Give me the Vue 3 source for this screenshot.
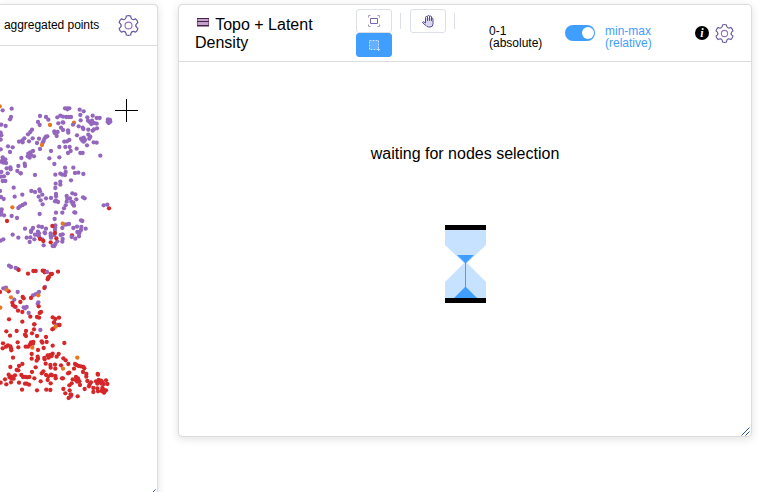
<script setup>
const colors = { purple: '#9467bd', red: '#d62728', orange: '#e6761f' }

// Each group lists "x,y" pairs in thirds of a pixel, offset by its top row.
const groups = [
  { color: 'orange', top: 95, pts: '222,83' },
  { color: 'red', top: 170, pts: '216,196' },
  { color: 'purple', top: 95, pts: '8,46 35,41 33,66 30,73 4,89 17,93 120,63 138,66 145,74 114,81 119,90 96,104 91,111 84,118 73,130 67,136 57,140 68,142 87,139 98,130 117,131 111,144 134,130 142,124 138,125 131,138 128,143 120,162 195,40 202,40 208,40 202,43 172,67 181,62 189,65 199,66 207,66 213,66 175,85 188,82 190,83 183,98 189,105 163,109 173,111 164,114 170,123 204,106 205,113 219,89 239,44 251,49 241,60 278,62 262,67 290,69 299,69 242,76 264,77 270,82 276,77 274,87 282,84 290,86 236,94 248,98 250,102 265,104 278,107 282,103 291,100 231,121 265,119 271,125 243,131 251,128 247,137 255,135 251,140 268,131 261,151 281,142 290,143 193,140 201,139 208,135 178,156 196,156 209,156 230,161 212,168 204,174 241,174 248,174 301,182 324,73 330,75 323,80 331,80 326,84 153,168 148,190 178,187 163,207 24,154 38,157 30,171 2,113 4,121 2,134 2,163 8,187 16,193 4,200 10,203 18,204 8,195 20,220 31,217 32,223 64,189 85,176 91,172 99,168 83,184 89,188 93,180 102,184 74,206 75,213 55,213 52,228 62,235 195,218 220,218' },
  { color: 'purple', top: 170, pts: '4,6 23,10 12,19 3,20 8,33 16,33 105,15 62,10 166,14 181,11 187,14 195,15 197,6 225,9 235,8 250,12 213,31 181,35 181,44 167,41 166,54 41,53 0,63 3,81 11,87 44,80 67,74 94,63 105,66 118,58 120,64 127,74 116,80 122,91 128,103 138,85 153,84 168,72 168,79 165,94 174,96 168,91 200,78 202,86 217,70 226,73 210,85 229,88 249,82 254,85 200,95 197,106 192,115 214,95 220,98 218,102 222,107 55,114 60,109 68,105 75,101 5,118 4,126 2,134 12,136 35,138 51,144 119,132 168,128 187,128 223,127 226,128 164,147 243,151 247,153 195,164 201,163 207,162 166,166 165,172 187,174 116,169 126,171 75,176 99,174 94,181 93,186 138,176 114,185 117,190 105,194 112,194 134,187 135,190 117,199 103,208 89,216 80,203 91,202 127,208 131,226 38,194 55,203 2,212 10,208 220,174 231,170 244,171 257,176 243,180 232,186 239,186 237,191 237,199 226,206 215,201 165,180 152,190 152,197 153,203 163,195 182,195 188,193 188,207 187,215 172,214 166,222 163,228 158,228 311,106 322,104' },
  { color: 'purple', top: 245, pts: '27,62 33,66 47,69 53,72 10,130 18,128 53,141 43,164 47,186 71,187 80,186 75,190 99,151 106,148 112,146 117,141 115,172 113,176 86,204 135,126 18,132 171,240' },
  { color: 'purple', top: 320, pts: '121,30 212,230' },
  { color: 'red', top: 170, pts: '21,153 157,168 165,189 169,205 152,217 120,207 130,213 327,115' },
  { color: 'red', top: 245, pts: '56,75 84,86 100,78 107,78 128,77 133,78 134,82 152,87 156,87 147,96 144,99 143,103 174,80 133,129 26,139 0,141 68,156 71,160 93,159 37,173 39,181 61,171 45,185 54,197 67,201 116,184 119,204 123,201 111,216 117,218 91,215 27,223 67,230 158,217 166,222 177,218 162,232 178,240 103,238' },
  { color: 'purple', top: 245, pts: '141,81' },
  { color: 'red', top: 320, pts: '19,34 50,33 78,33 103,13 102,28 96,40 30,47 75,44 78,48 111,48 138,51 157,28 160,26 178,15 162,8 9,70 8,85 24,76 18,80 31,79 33,85 34,91 53,67 55,82 77,80 84,80 93,67 100,66 99,71 90,74 125,64 127,68 140,66 131,84 114,90 158,77 193,69 95,102 95,116 39,113 113,110 114,116 110,122 133,114 134,118 143,106 146,113 151,105 155,108 158,101 170,110 176,102 190,115 197,121 205,132 31,141 57,138 67,132 50,150 55,151 107,142 137,131 151,135 152,143 165,134 166,146 183,136 222,146 225,132 229,135 236,138 243,139 250,141 253,145 249,156 259,162 259,170 204,160 208,158 96,156 130,154 125,160 26,164 29,172 35,170 45,166 35,176 41,176 15,178 2,188 19,193 33,187 57,188 64,165 69,171 76,171 88,171 82,172 103,175 122,184 138,165 145,169 153,164 156,166 166,168 143,180 167,175 186,175 189,175 152,190 75,191 80,191 87,194 66,209 111,211 139,209 151,210 218,178 228,171 234,175 235,181 228,181 232,185 238,184 215,190 208,196 209,211 240,195 190,207 196,220 212,223 214,225 206,234 233,229 262,183 273,187 269,193 267,199 254,207 293,162 294,164 288,184 296,180 303,182 300,186 306,186 305,191 318,181 322,192 311,192 292,191 280,204 280,216 292,205 294,214 307,204 310,208 318,211 313,216 305,213 312,218' },
  { color: 'orange', top: 95, pts: '-1,34 150,90 126,150' },
  { color: 'orange', top: 170, pts: '37,112 188,161' },
  { color: 'orange', top: 245, pts: '33,157 20,134 1,188 115,151' },
  { color: 'orange', top: 320, pts: '167,20 97,83 232,113 189,146' },
]

const dots = groups.flatMap(g => g.pts.split(' ').map(p => {
  const [x, y] = p.split(',').map(Number)
  return { x: x / 3, y: g.top - 46 + y / 3, fill: colors[g.color] }
}))

const gear = (() => {
  // six rounded teeth around the centre
  const out = []
  for (let i = 0; i < 6; i++) {
    const a = (i * 60 - 90) * Math.PI / 180
    const pt = (r, d) => {
      const t = a + d * Math.PI / 180
      return `${(10 + r * Math.cos(t)).toFixed(2)} ${(10 + r * Math.sin(t)).toFixed(2)}`
    }
    out.push(`${i ? 'L' : 'M'}${pt(7.9, -17)} L${pt(9.3, -13)} Q${pt(9.8, 0)} ${pt(9.3, 13)} L${pt(7.9, 17)} Q${pt(6.1, 30)} ${pt(7.9, 43)}`)
  }
  return out.join(' ') + 'Z'
})()
</script>

<template>
  <main class="board">
    <section class="card left">
      <header class="head">
        <span class="label">aggregated points</span>
        <svg class="gear" viewBox="0 0 20 20"><path :d="gear" /><circle cx="10" cy="10" r="3.3" /></svg>
      </header>
      <svg class="plot" viewBox="0 0 157 446">
        <circle v-for="(d, i) in dots" :key="i" :cx="d.x" :cy="d.y" r="2.15" :fill="d.fill" />
        <path class="cross" d="M115 64.500h23M126.500 53v23" />
      </svg>
      <svg class="grip" viewBox="0 0 9 9"><path d="M.5 8.500l8-8M4.500 8.500l4-4" /></svg>
    </section>

    <section class="card right">
      <header class="head">
        <h1 class="title">
          <svg class="bars" viewBox="0 0 12 9"><path fill="#c3a2d0" d="M0 0h12v8H0z" /><path d="M0 .5h12M0 3.500h12M0 7.500h12" /></svg>
          Topo + Latent Density
        </h1>
        <div class="tools">
          <div class="stack">
            <button class="btn">
              <svg viewBox="0 0 12 12"><path d="M2.500 3.500h7v5h-7z" /><path class="corner" d="M.5 2.500v-2h2M9.500.5h2v2M.5 9.500v2h2M9.500 11.500h2v-2" /></svg>
            </button>
            <button class="btn active">
              <svg viewBox="0 0 12 12"><rect x="2" y="2" width="8" height="8" fill="#fff" fill-opacity=".2" stroke="none" /><path stroke-dasharray="2 1" d="M1.500 1.500h9v9h-9z" /><path d="M9.500 10.500h2.500M10.500 9.500v2.500" /></svg>
            </button>
          </div>
          <i class="rule"></i>
          <button class="btn hand">
            <svg viewBox="0 0 12 13"><path fill="#dcd5f0" stroke="none" d="M3.500 3h7v6L9 12H5L3 9z" /><path d="M3.500 8V2.500q0-1 1-1t1 1V6M5.500 5.500V1.500q0-1 1-1t1 1v4M7.500 5.500V2q0-1 1-1t1 1v4M9.500 6V4q0-.8.700-.8t.800.800V9q0 3-3 3H6.500Q5 12 4 10.500L.8 8q-.6-1.200.6-1.300L3.500 8" /></svg>
          </button>
          <i class="rule"></i>
        </div>
        <div class="scale">
          <span class="off">0-1<br>(absolute)</span>
          <span class="switch"></span>
          <span class="on">min-max<br>(relative)</span>
        </div>
        <div class="actions">
          <span class="info">i</span>
          <svg class="gear small" viewBox="0 0 20 20"><path :d="gear" /><circle cx="10" cy="10" r="3.3" /></svg>
        </div>
      </header>
      <div class="body">
        <p>waiting for nodes selection</p>
        <svg class="glass" viewBox="0 0 41 78">
          <path fill="#c6e2ff" d="M0 5h41v15L22 38 41 57v16H0V57L19 38 0 20z" />
          <path fill="#409eff" d="M12 30h17l-8 8h-1zM20 38h1v24l11 11H9l11-11z" />
          <path d="M0 0h41v5H0zM0 73h41v5H0z" />
        </svg>
      </div>
      <svg class="grip" viewBox="0 0 9 9"><path d="M.5 8.500l8-8M4.500 8.500l4-4" /></svg>
    </section>
  </main>
</template>

<style>
body { background: #fff; overflow: hidden; }
</style>

<style scoped>
.board { display: flex; align-items: flex-start; gap: 20px; height: 492px; padding-top: 4px; box-sizing: border-box; font-family: "Liberation Sans", Arial, sans-serif; font-size: 12px; color: #000; overflow: hidden; }
.card { position: relative; box-sizing: border-box; border: 1px solid #dcdcdc; border-radius: 4px; background: #fff; box-shadow: 0 2px 8px rgba(0, 0, 0, .12); }
.head { display: flex; box-sizing: border-box; border-bottom: 1px solid #dcdcdc; }
.left { width: 158px; height: 495px; border-left: 0; border-top-left-radius: 0; flex: none; }
.left .head { height: 41px; align-items: center; justify-content: space-between; padding: 0 18px 0 4px; }
.label { letter-spacing: -.05px; }
.gear { width: 21px; height: 21px; fill: none; stroke: #6657a0; stroke-width: 1.15; overflow: visible; }
.gear circle { stroke: #9a72b8; }
.gear.small { width: 19px; height: 19px; }
.plot { display: block; width: 157px; height: 446px; }
.cross { stroke: #000; fill: none; }
.grip { position: absolute; right: 1px; bottom: 0; width: 9px; height: 9px; fill: none; stroke: #24589a; }
.right { width: 574px; height: 433px; flex: none; }
.right .head { height: 57px; }
.title { width: 161px; box-sizing: border-box; margin: 0; padding: 11px 0 0; margin-left: 16px; font-size: 16px; line-height: 18px; font-weight: 400; }
.bars { width: 12px; height: 9px; margin: 0 2px 3px 2px; stroke: #4b2342; }
.tools { display: flex; align-items: flex-start; padding-top: 4px; width: 133px; }
.stack { display: flex; flex-direction: column; }
.btn { display: flex; align-items: center; justify-content: center; width: 36px; height: 24px; padding: 0; box-sizing: border-box; border: 1px solid #dcdfe6; border-radius: 3px; background: #fff; }
.btn svg { width: 12px; height: 12px; fill: none; stroke: #7866b5; }
.btn .corner { stroke: #a99ac4; }
.btn.active { background: #409eff; border-color: #409eff; }
.btn.active svg { stroke: #c6e2ff; }
.btn.hand svg { height: 13px; stroke: #4c4b97; }
.rule { width: 1px; height: 16px; margin: 4px 9px 0 8px; background: #dcdfe6; }
.scale { display: flex; align-items: flex-start; padding-top: 20px; line-height: 12px; }
.off { width: 76px; }
.on { color: #409eff; margin-left: 10px; width: 90px; }
.switch { position: relative; flex: none; width: 30px; height: 16px; border-radius: 8px; background: #409eff; }
.switch::after { content: ""; position: absolute; right: 1px; top: 2px; width: 12px; height: 12px; border-radius: 50%; background: #fff; }
.actions { display: flex; gap: 6px; align-items: center; height: 56px; }
.info { width: 14px; height: 14px; border-radius: 50%; background: #000; color: #fff; text-align: center; font: italic bold 12px/14px "Liberation Serif", serif; }
.body { display: flex; flex-direction: column; align-items: center; padding-top: 83px; }
.body p { margin: 0; font-size: 16px; line-height: 18px; }
.glass { width: 41px; height: 78px; margin-top: 62px; margin-left: 1px; }
</style>
